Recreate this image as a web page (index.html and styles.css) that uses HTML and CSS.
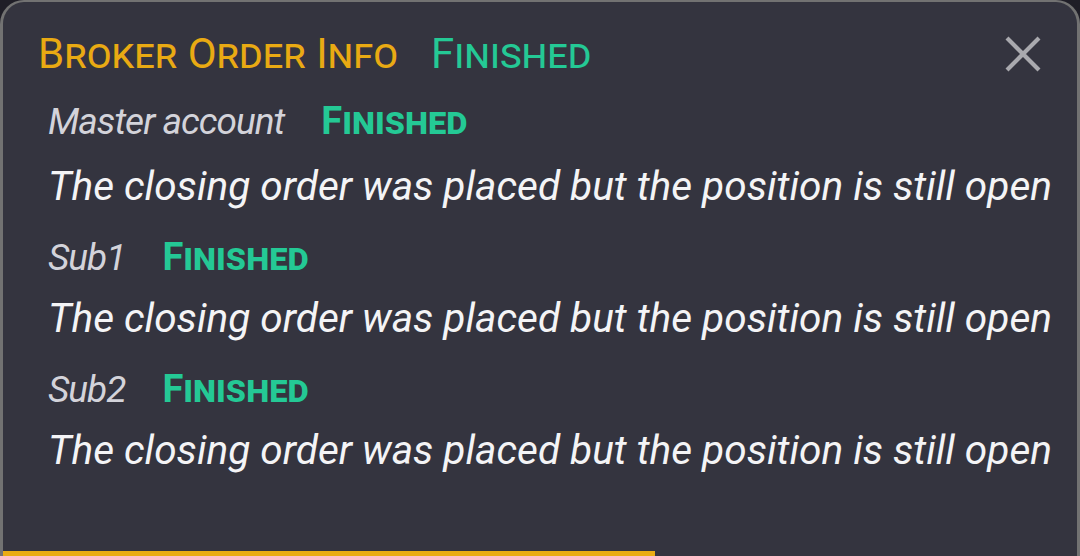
FILE: index.html
```html
<!DOCTYPE html>
<html lang="en">
<head>
<meta charset="utf-8">
<title>Broker Order Info</title>
<link rel="stylesheet" href="styles.css">
</head>
<body>
<div class="panel">
  <div class="header">
    <span class="title">Broker Order Info</span>
    <span class="status">Finished</span>
    <button class="close" aria-label="Close">
      <svg width="36" height="36" viewBox="0 0 36 36"><path d="M2 2 L34 34 M34 2 L2 34" stroke="#a9a9ae" stroke-width="4.2" fill="none"/></svg>
    </button>
  </div>
  <div class="body">
    <div class="row row-master"><span class="label">Master account</span><span class="state">Finished</span></div>
    <div class="msg">The closing order was placed but the position is still open</div>
    <div class="row"><span class="label">Sub1</span><span class="state">Finished</span></div>
    <div class="msg">The closing order was placed but the position is still open</div>
    <div class="row"><span class="label">Sub2</span><span class="state">Finished</span></div>
    <div class="msg">The closing order was placed but the position is still open</div>
  </div>
  <div class="progress"></div>
</div>
</body>
</html>
```

FILE: styles.css
```css
html, body {
  margin: 0;
  padding: 0;
  background: #1f1e27;
  width: 1080px;
  height: 556px;
  overflow: hidden;
}

.panel {
  box-sizing: border-box;
  width: 1080px;
  height: 556px;
  background: #34343f;
  border: 3px solid #727272;
  border-top-width: 2px;
  border-bottom: none;
  border-radius: 24px 24px 0 0;
  display: flex;
  flex-direction: column;
  font-family: Roboto, "Liberation Sans", sans-serif;
}

.header {
  display: flex;
  align-items: baseline;
  padding: 27px 36px 0 35px;
  line-height: 50px;
}

.title {
  font-size: 42px;
  font-variant: small-caps;
  color: #e9aa13;
}

.status {
  font-size: 42px;
  font-variant: small-caps;
  color: #24c995;
  margin-left: 33px;
}

.close {
  margin-left: auto;
  align-self: center;
  background: none;
  border: none;
  padding: 0;
  width: 36px;
  height: 36px;
  display: flex;
}

.body {
  padding: 12px 0 0 45px;
}

.row {
  display: flex;
  align-items: baseline;
  line-height: 61px;
  height: 61px;
}

.row-master {
  margin-bottom: 4px;
}

.label {
  font-size: 37px;
  letter-spacing: -1px;
  font-style: italic;
  color: #d3d3da;
}

.state {
  font-size: 38px;
  font-weight: 700;
  font-variant: small-caps;
  color: #24c995;
  margin-left: 37px;
}

.msg {
  font-size: 40.6px;
  font-style: italic;
  color: #f4f4f6;
  line-height: 61px;
  height: 61px;
  margin-bottom: 10px;
  white-space: nowrap;
}

.progress {
  margin-top: auto;
  width: 652px;
  height: 5px;
  background: #eaac13;
}
```
